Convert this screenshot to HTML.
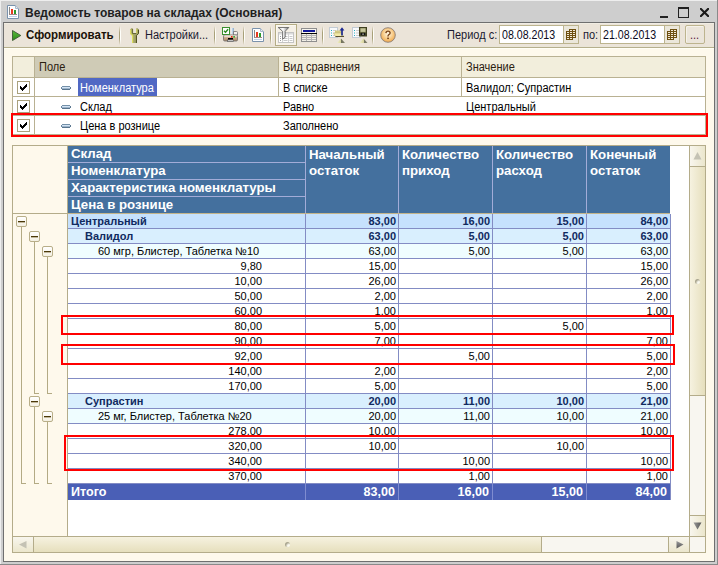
<!DOCTYPE html><html><head><meta charset="utf-8"><style>
*{margin:0;padding:0;box-sizing:border-box}
html,body{width:718px;height:565px;overflow:hidden;background:#cecece;font-family:"Liberation Sans", sans-serif;}
.a{position:absolute}
.t{position:absolute;white-space:nowrap;color:#000;transform-origin:0 0}
.r{text-align:right;transform-origin:100% 0}
.b{font-weight:bold}
</style></head><body><div class="a" style="left:0;top:0;width:718px;height:1px;background:#eeeeee"></div><div class="a" style="left:0;top:0;width:1px;height:565px;background:#eeeeee"></div><div class="a" style="left:0;top:564px;width:718px;height:1px;background:#8a8a8a"></div><div class="a" style="left:717px;top:0;width:1px;height:565px;background:#8a8a8a"></div><svg class="a" style="left:7px;top:5px" width="12" height="14" viewBox="0 0 12 14">
<path d="M0.5 0.5 H8.5 L11.5 3.5 V13.5 H0.5 Z" fill="#fdfeff" stroke="#7a92ac"/>
<path d="M8.5 0.5 V3.5 H11.5" fill="#e4eaf2" stroke="#a8b8ca"/>
<rect x="2" y="2" width="1" height="8" fill="#8a8a8a"/>
<rect x="2" y="9" width="8" height="1" fill="#a08888"/>
<rect x="4" y="4" width="2" height="5" fill="#e83a20"/>
<rect x="7" y="5" width="2" height="4" fill="#2a9a2a"/>
<rect x="2" y="11" width="8" height="1" fill="#bcd2ea"/>
</svg><div class="t b" style="top:5px;font-size:12px;line-height:16px;color:#1f1f1f;left:25px;">Ведомость товаров на складах (Основная)</div><div class="a" style="left:660px;top:16px;width:8px;height:2px;background:#222"></div><div class="a" style="left:678px;top:7px;width:11px;height:11px;border:1px solid #222;border-top-width:2px"></div><svg class="a" style="left:700px;top:8px" width="9" height="9" viewBox="0 0 9 9">
<path d="M0.9 0.9 L8.1 8.1 M8.1 0.9 L0.9 8.1" stroke="#1a1a1a" stroke-width="2.1" stroke-linecap="square"/></svg><div class="a" style="left:3px;top:22px;width:712px;height:540px;border:1px solid #6f6f6f;background:#fef9ec"></div><div class="a" style="left:4px;top:23px;width:710px;height:25px;background:#ebe4d9;border-top:1px solid #f1ede3;border-bottom:1px solid #b6af8c"></div><div class="a" style="left:4px;top:46px;width:710px;height:1px;background:#e9e5d8"></div><div class="a" style="left:4px;top:48px;width:710px;height:1px;background:#fffff6"></div><svg class="a" style="left:12px;top:30px" width="10" height="11" viewBox="0 0 10 11">
<defs><linearGradient id="pg" x1="0" y1="0" x2="0" y2="1"><stop offset="0" stop-color="#5cbc3c"/><stop offset="1" stop-color="#2a8a18"/></linearGradient></defs>
<path d="M0.5 0.5 L8.8 5.5 L0.5 10.5 Z" fill="url(#pg)" stroke="#3c5a34" stroke-width="0.9"/></svg><div class="t b" style="top:28px;font-size:12.5px;line-height:15px;color:#1a1208;transform:scaleX(0.92);left:26px;">Сформировать</div><div class="a" style="left:119px;top:26px;width:1px;height:19px;background:linear-gradient(rgba(168,160,120,0),#a8a078 35%,#a8a078 65%,rgba(168,160,120,0))"></div><div class="a" style="left:120px;top:26px;width:1px;height:19px;background:linear-gradient(rgba(255,255,250,0),#fffffa 30%,#fffffa 70%,rgba(255,255,250,0))"></div><svg class="a" style="left:130px;top:28px" width="9" height="15" viewBox="0 0 9 15">
<path d="M0 1.5 L1.8 0 L3 0.8 V5 H6 V0.8 L7.2 0 L9 1.5 V5.5 L7 7.5 V15 H2 V7.5 L0 5.5 Z" fill="#a4a468"/>
<path d="M0.6 1.5 V5.4 L2.6 7.4 V15" fill="none" stroke="#dcdc5c" stroke-width="1.2"/>
<path d="M6.6 1 V5.2" fill="none" stroke="#d0d060" stroke-width="1"/>
<path d="M8.5 1.8 V5.4 L6.4 7.5 V15" fill="none" stroke="#4a4a1c" stroke-width="1"/>
<path d="M2.6 1 V5.5 H6.2" fill="none" stroke="#5a5a28" stroke-width="0.8"/></svg><div class="t" style="top:28px;font-size:12px;line-height:15px;color:#1a1a30;transform:scaleX(0.917);left:145px;">Настройки...</div><div class="a" style="left:214px;top:26px;width:1px;height:19px;background:linear-gradient(rgba(168,160,120,0),#a8a078 35%,#a8a078 65%,rgba(168,160,120,0))"></div><div class="a" style="left:215px;top:26px;width:1px;height:19px;background:linear-gradient(rgba(255,255,250,0),#fffffa 30%,#fffffa 70%,rgba(255,255,250,0))"></div><svg class="a" style="left:222px;top:27px" width="17" height="17" viewBox="0 0 17 17">
<defs><linearGradient id="ppg" x1="0" y1="0" x2="1" y2="0"><stop offset="0" stop-color="#f4f8fc"/><stop offset="1" stop-color="#88a8c8"/></linearGradient>
<linearGradient id="pbg" x1="0" y1="0" x2="0" y2="1"><stop offset="0" stop-color="#f0e4d8"/><stop offset="0.5" stop-color="#c8a888"/><stop offset="1" stop-color="#a88868"/></linearGradient></defs>
<rect x="9" y="1" width="3" height="6" fill="url(#ppg)"/>
<path d="M11.5 4.5 H14.5 Q15.5 4.5 15.5 5.5 V8 H11.5 Z" fill="#f4f0ec" stroke="#707070" stroke-width="0.8"/>
<rect x="1.5" y="8" width="14" height="6" rx="1.2" fill="url(#pbg)" stroke="#6a6a6a" stroke-width="0.8"/>
<rect x="2.5" y="8.6" width="12" height="1" fill="#f4ece4"/>
<rect x="9" y="9" width="1.6" height="1.6" fill="#e82818"/><rect x="11.3" y="9" width="1.6" height="1.6" fill="#28a828"/>
<rect x="6" y="11" width="5" height="1.7" fill="#000"/>
<rect x="5.5" y="13" width="6" height="1.6" fill="#fff" stroke="#555" stroke-width="0.7"/>
<rect x="0.5" y="0.5" width="7" height="7" fill="#fff" stroke="#3a9030"/>
<path d="M2 3.8 L3.5 5.3 L6.1 2.3" fill="none" stroke="#2a8a20" stroke-width="1.4"/></svg><div class="a" style="left:243px;top:26px;width:1px;height:19px;background:linear-gradient(rgba(168,160,120,0),#a8a078 35%,#a8a078 65%,rgba(168,160,120,0))"></div><div class="a" style="left:244px;top:26px;width:1px;height:19px;background:linear-gradient(rgba(255,255,250,0),#fffffa 30%,#fffffa 70%,rgba(255,255,250,0))"></div><svg class="a" style="left:252px;top:28px" width="12" height="14" viewBox="0 0 12 14">
<path d="M0.5 0.5 H8.5 L11.5 3.5 V13.5 H0.5 Z" fill="#fdfeff" stroke="#7a92ac"/>
<path d="M8.5 0.5 V3.5 H11.5" fill="#e4eaf2" stroke="#a8b8ca"/>
<rect x="2" y="2" width="1" height="8" fill="#8a8a8a"/>
<rect x="2" y="9" width="8" height="1" fill="#a08888"/>
<rect x="4" y="4" width="2" height="5" fill="#e83a20"/>
<rect x="7" y="5" width="2" height="4" fill="#2a9a2a"/>
<rect x="2" y="11" width="8" height="1" fill="#bcd2ea"/>
</svg><div class="a" style="left:270px;top:26px;width:1px;height:19px;background:linear-gradient(rgba(168,160,120,0),#a8a078 35%,#a8a078 65%,rgba(168,160,120,0))"></div><div class="a" style="left:271px;top:26px;width:1px;height:19px;background:linear-gradient(rgba(255,255,250,0),#fffffa 30%,#fffffa 70%,rgba(255,255,250,0))"></div><div class="a" style="left:275px;top:24px;width:22px;height:22px;border:1px solid #b4ac84;background:#f5f0e6;box-shadow:inset 1px 1px 0 #fbf8f0"></div><svg class="a" style="left:278px;top:27px" width="16" height="16" viewBox="0 0 16 16">
<defs><linearGradient id="fg" x1="0" y1="0" x2="1" y2="0"><stop offset="0" stop-color="#d0d0d0"/><stop offset="0.45" stop-color="#ffffff"/><stop offset="1" stop-color="#707070"/></linearGradient></defs>
<rect x="0.5" y="5.5" width="15" height="10" fill="#fff" stroke="#c4c4c4"/>
<rect x="1" y="6" width="14" height="1.6" fill="#dcdcdc"/>
<path d="M4.5 6 V15 M10.5 6 V15" stroke="#d4d4d4"/>
<rect x="2" y="9" width="1" height="1" fill="#9a9a9a"/><rect x="2" y="11" width="1" height="1" fill="#9a9a9a"/><rect x="2" y="13" width="1" height="1" fill="#9a9a9a"/>
<path d="M5.5 9.5 H9.5 M5.5 11.5 H9.5 M5.5 13.5 H9.5 M11.5 9.5 H14.5 M11.5 11.5 H14.5 M11.5 13.5 H14.5" stroke="#c8c8c8"/>
<path d="M0.2 0.5 H10.8 L7.2 4.3 V10.2 L4.6 12.2 V4.3 Z" fill="url(#fg)" stroke="#5a5a5a" stroke-width="0.8" stroke-linejoin="round"/></svg><svg class="a" style="left:301px;top:28px" width="16" height="14" viewBox="0 0 16 14" shape-rendering="crispEdges">
<rect x="0" y="0" width="16" height="14" fill="#8e8e8e"/>
<rect x="1" y="1" width="14" height="12" fill="#b4b4b4"/>
<rect x="1" y="1" width="14" height="4" fill="#f6f4ec"/>
<rect x="2" y="2" width="12" height="2" fill="#10189a"/>
<rect x="0" y="5" width="16" height="1" fill="#050505"/>
<rect x="1" y="6" width="4" height="1" fill="#f2efe6"/><rect x="6" y="6" width="4" height="1" fill="#f2efe6"/><rect x="11" y="6" width="4" height="1" fill="#f2efe6"/><rect x="1" y="8" width="4" height="1" fill="#f2efe6"/><rect x="6" y="8" width="4" height="1" fill="#f2efe6"/><rect x="11" y="8" width="4" height="1" fill="#f2efe6"/><rect x="1" y="10" width="4" height="1" fill="#f2efe6"/><rect x="6" y="10" width="4" height="1" fill="#f2efe6"/><rect x="11" y="10" width="4" height="1" fill="#f2efe6"/><rect x="1" y="12" width="4" height="1" fill="#f2efe6"/><rect x="6" y="12" width="4" height="1" fill="#f2efe6"/><rect x="11" y="12" width="4" height="1" fill="#f2efe6"/></svg><div class="a" style="left:322px;top:26px;width:1px;height:19px;background:linear-gradient(rgba(168,160,120,0),#a8a078 35%,#a8a078 65%,rgba(168,160,120,0))"></div><div class="a" style="left:323px;top:26px;width:1px;height:19px;background:linear-gradient(rgba(255,255,250,0),#fffffa 30%,#fffffa 70%,rgba(255,255,250,0))"></div><svg class="a" style="left:329px;top:27px" width="18" height="17" viewBox="0 0 18 17">
<defs><linearGradient id="tg" x1="0" y1="0" x2="1" y2="0"><stop offset="0" stop-color="#f4f2c8"/><stop offset="0.5" stop-color="#d8d4a0"/><stop offset="0.55" stop-color="#70705c"/><stop offset="1" stop-color="#888870"/></linearGradient></defs>
<rect x="0.5" y="0.5" width="8" height="10" fill="#f8fafc" stroke="#c4ccd4"/>
<rect x="2" y="3" width="1" height="1" fill="#28b0c0"/><rect x="2" y="5.5" width="1" height="1" fill="#28b0c0"/><rect x="2" y="8" width="1" height="1" fill="#28b0c0"/>
<path d="M4 3.5 H7 M4 6 H7 M4 8.5 H7" stroke="#cfcfcf"/>
<rect x="6" y="3.5" width="7" height="5.5" fill="#d4cc84"/>
<path d="M4.5 6 H12.5 L14.8 9.6 H6.5 Z" fill="#f2eaa8" stroke="#b8b070" stroke-width="0.5"/>
<path d="M6.5 9.5 H15" stroke="#585030" stroke-width="1"/>
<path d="M13 2.5 V8.5" stroke="#1c2890" stroke-width="1.7"/>
<path d="M10.6 3.6 L13 0.2 L15.4 3.6 Z" fill="#1c2890"/>
<path d="M8 16 L12 11.6 L16 16 Z" fill="url(#tg)"/></svg><svg class="a" style="left:352px;top:27px" width="17" height="17" viewBox="0 0 17 17">
<rect x="0.5" y="0.5" width="8" height="10" fill="#f8fafc" stroke="#c4ccd4"/>
<rect x="2" y="3" width="1" height="1" fill="#28b0c0"/><rect x="2" y="5.5" width="1" height="1" fill="#28b0c0"/><rect x="2" y="8" width="1" height="1" fill="#28b0c0"/>
<path d="M4 3.5 H7 M4 6 H7 M4 8.5 H7" stroke="#cfcfcf"/>
<rect x="7.5" y="0.5" width="7" height="8.5" fill="#6c6c40" stroke="#404020"/>
<rect x="8.5" y="1.3" width="5" height="3.6" fill="#c4c49a"/>
<rect x="8.5" y="5.8" width="5" height="2.7" fill="#111"/>
<rect x="10.4" y="6.6" width="1.3" height="1.1" fill="#f0f0e0"/>
<path d="M7.5 16 L11.5 11.6 L15.5 16 Z" fill="url(#tg)"/></svg><div class="a" style="left:372px;top:26px;width:1px;height:19px;background:linear-gradient(rgba(168,160,120,0),#a8a078 35%,#a8a078 65%,rgba(168,160,120,0))"></div><div class="a" style="left:373px;top:26px;width:1px;height:19px;background:linear-gradient(rgba(255,255,250,0),#fffffa 30%,#fffffa 70%,rgba(255,255,250,0))"></div><svg class="a" style="left:380px;top:27px" width="16" height="16" viewBox="0 0 16 16">
<defs><radialGradient id="hg" cx="0.5" cy="0.42" r="0.62"><stop offset="0" stop-color="#fff6e6"/><stop offset="0.5" stop-color="#f9d090"/><stop offset="1" stop-color="#eea040"/></radialGradient></defs>
<circle cx="8" cy="8" r="7.3" fill="url(#hg)" stroke="#8c8078" stroke-width="0.9"/>
<path d="M5.9 6.1 Q6.1 4.1 8 4.1 Q10.1 4.1 10.1 5.9 Q10.1 7 8.8 7.7 Q8 8.1 8 9.4" fill="none" stroke="#7a4418" stroke-width="1.4"/>
<rect x="7.2" y="10.6" width="1.7" height="1.5" fill="#7a4418"/></svg><div class="t" style="top:28px;font-size:12px;line-height:15px;color:#1a1a30;transform:scaleX(0.917);left:447px;">Период с:</div><div class="a" style="left:499px;top:25px;width:65px;height:19px;border:1px solid #bcb48e;background:#fff"></div><div class="t" style="top:28px;font-size:12px;line-height:15px;color:#0a0a20;transform:scaleX(0.885);left:502px;">08.08.2013</div><div class="a" style="left:563px;top:25px;width:16px;height:19px;border:1px solid #bcb48e;background:#ebe7db"></div><svg class="a" style="left:566px;top:29px" width="10" height="11" viewBox="0 0 10 11" shape-rendering="crispEdges"><rect x="3" y="0" width="7" height="2" fill="#6e5010"/><rect x="0" y="2" width="10" height="7" fill="#6e5010"/><rect x="0" y="9" width="7" height="2" fill="#6e5010"/><rect x="4" y="1" width="2" height="1" fill="#f2ead8"/><rect x="7" y="1" width="2" height="1" fill="#f2ead8"/><rect x="1" y="3" width="2" height="1" fill="#f2ead8"/><rect x="4" y="3" width="2" height="1" fill="#f2ead8"/><rect x="7" y="3" width="2" height="1" fill="#f2ead8"/><rect x="1" y="5" width="2" height="1" fill="#f2ead8"/><rect x="4" y="5" width="2" height="1" fill="#f2ead8"/><rect x="7" y="5" width="2" height="1" fill="#f2ead8"/><rect x="1" y="7" width="2" height="1" fill="#f2ead8"/><rect x="4" y="7" width="2" height="1" fill="#f2ead8"/><rect x="7" y="7" width="2" height="1" fill="#f2ead8"/><rect x="1" y="9" width="2" height="1" fill="#f2ead8"/><rect x="4" y="9" width="2" height="1" fill="#f2ead8"/></svg><div class="t" style="top:28px;font-size:12px;line-height:15px;color:#1a1a30;transform:scaleX(0.917);left:583px;">по:</div><div class="a" style="left:600px;top:25px;width:65px;height:19px;border:1px solid #bcb48e;background:#fff"></div><div class="t" style="top:28px;font-size:12px;line-height:15px;color:#0a0a20;transform:scaleX(0.885);left:603px;">21.08.2013</div><div class="a" style="left:664px;top:25px;width:16px;height:19px;border:1px solid #bcb48e;background:#ebe7db"></div><svg class="a" style="left:667px;top:29px" width="10" height="11" viewBox="0 0 10 11" shape-rendering="crispEdges"><rect x="3" y="0" width="7" height="2" fill="#6e5010"/><rect x="0" y="2" width="10" height="7" fill="#6e5010"/><rect x="0" y="9" width="7" height="2" fill="#6e5010"/><rect x="4" y="1" width="2" height="1" fill="#f2ead8"/><rect x="7" y="1" width="2" height="1" fill="#f2ead8"/><rect x="1" y="3" width="2" height="1" fill="#f2ead8"/><rect x="4" y="3" width="2" height="1" fill="#f2ead8"/><rect x="7" y="3" width="2" height="1" fill="#f2ead8"/><rect x="1" y="5" width="2" height="1" fill="#f2ead8"/><rect x="4" y="5" width="2" height="1" fill="#f2ead8"/><rect x="7" y="5" width="2" height="1" fill="#f2ead8"/><rect x="1" y="7" width="2" height="1" fill="#f2ead8"/><rect x="4" y="7" width="2" height="1" fill="#f2ead8"/><rect x="7" y="7" width="2" height="1" fill="#f2ead8"/><rect x="1" y="9" width="2" height="1" fill="#f2ead8"/><rect x="4" y="9" width="2" height="1" fill="#f2ead8"/></svg><div class="a" style="left:685px;top:25px;width:20px;height:19px;border:1px solid #bdb48e;border-radius:2px;background:#ebe5da;box-shadow:inset 1px 1px 0 #f6f2ea"></div><div class="t" style="top:28px;font-size:12px;line-height:15px;color:#5a2040;transform:scaleX(0.917);left:690px;">...</div><div class="a" style="left:12px;top:56px;width:694px;height:79px;border:1px solid #b9b192;background:#fff"></div><div class="a" style="left:13px;top:57px;width:21px;height:20px;background:#f2eedc"></div><div class="a" style="left:35px;top:57px;width:243px;height:20px;background:#cfcbb6"></div><div class="a" style="left:279px;top:57px;width:182px;height:20px;background:#f2eedc"></div><div class="a" style="left:462px;top:57px;width:243px;height:20px;background:#f2eedc"></div><div class="a" style="left:13px;top:77px;width:692px;height:1px;background:#b9b192"></div><div class="a" style="left:34px;top:57px;width:1px;height:77px;background:#b9b192"></div><div class="a" style="left:278px;top:57px;width:1px;height:39px;background:#b9b192"></div><div class="a" style="left:461px;top:57px;width:1px;height:39px;background:#b9b192"></div><div class="a" style="left:13px;top:96px;width:692px;height:1px;background:#b9b192"></div><div class="a" style="left:13px;top:115px;width:692px;height:1px;background:#b9b192"></div><div class="t" style="top:60px;font-size:12px;line-height:15px;color:#2a2010;transform:scaleX(0.917);left:39px;">Поле</div><div class="t" style="top:60px;font-size:12px;line-height:15px;color:#2a2010;transform:scaleX(0.917);left:283px;">Вид сравнения</div><div class="t" style="top:60px;font-size:12px;line-height:15px;color:#2a2010;transform:scaleX(0.917);left:466px;">Значение</div><div class="a" style="left:17px;top:81px;width:13px;height:13px;border:1px solid #aaa17c;background:#fff"></div><svg class="a" style="left:20px;top:84px" width="7" height="7" viewBox="0 0 7 7" shape-rendering="crispEdges" fill="#000"><rect x="6" y="0" width="1" height="1"/><rect x="5" y="1" width="1" height="1"/><rect x="6" y="1" width="1" height="1"/><rect x="0" y="2" width="1" height="1"/><rect x="4" y="2" width="1" height="1"/><rect x="5" y="2" width="1" height="1"/><rect x="6" y="2" width="1" height="1"/><rect x="0" y="3" width="1" height="1"/><rect x="1" y="3" width="1" height="1"/><rect x="3" y="3" width="1" height="1"/><rect x="4" y="3" width="1" height="1"/><rect x="5" y="3" width="1" height="1"/><rect x="0" y="4" width="1" height="1"/><rect x="1" y="4" width="1" height="1"/><rect x="2" y="4" width="1" height="1"/><rect x="3" y="4" width="1" height="1"/><rect x="4" y="4" width="1" height="1"/><rect x="1" y="5" width="1" height="1"/><rect x="2" y="5" width="1" height="1"/><rect x="3" y="5" width="1" height="1"/><rect x="2" y="6" width="1" height="1"/></svg><svg class="a" style="left:61px;top:86px" width="10" height="4" viewBox="0 0 10 4" shape-rendering="crispEdges"><rect x="1" y="0" width="8" height="1" fill="#7390a8"/><rect x="0" y="1" width="1" height="2" fill="#6a86a0"/><rect x="9" y="1" width="1" height="2" fill="#5c7890"/><rect x="1" y="1" width="8" height="1" fill="#d4e4f4"/><rect x="1" y="2" width="8" height="1" fill="#9cb4ca"/><rect x="1" y="3" width="8" height="1" fill="#58748c"/></svg><div class="a" style="left:78px;top:78px;width:79px;height:18px;background:#5068c4"></div><div class="t" style="top:81px;font-size:12px;line-height:15px;color:#fff;transform:scaleX(0.917);left:80px;">Номенклатура</div><div class="t" style="top:81px;font-size:12px;line-height:15px;color:#000;transform:scaleX(0.917);left:283px;">В списке</div><div class="t" style="top:81px;font-size:12px;line-height:15px;color:#000;transform:scaleX(0.917);left:466px;">Валидол; Супрастин</div><div class="a" style="left:17px;top:100px;width:13px;height:13px;border:1px solid #aaa17c;background:#fff"></div><svg class="a" style="left:20px;top:103px" width="7" height="7" viewBox="0 0 7 7" shape-rendering="crispEdges" fill="#000"><rect x="6" y="0" width="1" height="1"/><rect x="5" y="1" width="1" height="1"/><rect x="6" y="1" width="1" height="1"/><rect x="0" y="2" width="1" height="1"/><rect x="4" y="2" width="1" height="1"/><rect x="5" y="2" width="1" height="1"/><rect x="6" y="2" width="1" height="1"/><rect x="0" y="3" width="1" height="1"/><rect x="1" y="3" width="1" height="1"/><rect x="3" y="3" width="1" height="1"/><rect x="4" y="3" width="1" height="1"/><rect x="5" y="3" width="1" height="1"/><rect x="0" y="4" width="1" height="1"/><rect x="1" y="4" width="1" height="1"/><rect x="2" y="4" width="1" height="1"/><rect x="3" y="4" width="1" height="1"/><rect x="4" y="4" width="1" height="1"/><rect x="1" y="5" width="1" height="1"/><rect x="2" y="5" width="1" height="1"/><rect x="3" y="5" width="1" height="1"/><rect x="2" y="6" width="1" height="1"/></svg><svg class="a" style="left:61px;top:105px" width="10" height="4" viewBox="0 0 10 4" shape-rendering="crispEdges"><rect x="1" y="0" width="8" height="1" fill="#7390a8"/><rect x="0" y="1" width="1" height="2" fill="#6a86a0"/><rect x="9" y="1" width="1" height="2" fill="#5c7890"/><rect x="1" y="1" width="8" height="1" fill="#d4e4f4"/><rect x="1" y="2" width="8" height="1" fill="#9cb4ca"/><rect x="1" y="3" width="8" height="1" fill="#58748c"/></svg><div class="t" style="top:100px;font-size:12px;line-height:15px;color:#000;transform:scaleX(0.917);left:80px;">Склад</div><div class="t" style="top:100px;font-size:12px;line-height:15px;color:#000;transform:scaleX(0.917);left:283px;">Равно</div><div class="t" style="top:100px;font-size:12px;line-height:15px;color:#000;transform:scaleX(0.917);left:466px;">Центральный</div><div class="a" style="left:17px;top:119px;width:13px;height:13px;border:1px solid #aaa17c;background:#fff"></div><svg class="a" style="left:20px;top:122px" width="7" height="7" viewBox="0 0 7 7" shape-rendering="crispEdges" fill="#000"><rect x="6" y="0" width="1" height="1"/><rect x="5" y="1" width="1" height="1"/><rect x="6" y="1" width="1" height="1"/><rect x="0" y="2" width="1" height="1"/><rect x="4" y="2" width="1" height="1"/><rect x="5" y="2" width="1" height="1"/><rect x="6" y="2" width="1" height="1"/><rect x="0" y="3" width="1" height="1"/><rect x="1" y="3" width="1" height="1"/><rect x="3" y="3" width="1" height="1"/><rect x="4" y="3" width="1" height="1"/><rect x="5" y="3" width="1" height="1"/><rect x="0" y="4" width="1" height="1"/><rect x="1" y="4" width="1" height="1"/><rect x="2" y="4" width="1" height="1"/><rect x="3" y="4" width="1" height="1"/><rect x="4" y="4" width="1" height="1"/><rect x="1" y="5" width="1" height="1"/><rect x="2" y="5" width="1" height="1"/><rect x="3" y="5" width="1" height="1"/><rect x="2" y="6" width="1" height="1"/></svg><svg class="a" style="left:61px;top:124px" width="10" height="4" viewBox="0 0 10 4" shape-rendering="crispEdges"><rect x="1" y="0" width="8" height="1" fill="#7390a8"/><rect x="0" y="1" width="1" height="2" fill="#6a86a0"/><rect x="9" y="1" width="1" height="2" fill="#5c7890"/><rect x="1" y="1" width="8" height="1" fill="#d4e4f4"/><rect x="1" y="2" width="8" height="1" fill="#9cb4ca"/><rect x="1" y="3" width="8" height="1" fill="#58748c"/></svg><div class="t" style="top:119px;font-size:12px;line-height:15px;color:#000;transform:scaleX(0.917);left:80px;">Цена в рознице</div><div class="t" style="top:119px;font-size:12px;line-height:15px;color:#000;transform:scaleX(0.917);left:283px;">Заполнено</div><div class="t" style="top:119px;font-size:12px;line-height:15px;color:#000;transform:scaleX(0.917);left:466px;"></div><div class="a" style="left:12px;top:145px;width:694px;height:408px;border:1px solid #b4ac8a;background:#fff"></div><div class="a" style="left:13px;top:146px;width:54px;height:390px;background:#fef9ec"></div><div class="a" style="left:67px;top:146px;width:1px;height:390px;background:#b4ac8a"></div><div class="a" style="left:13px;top:213px;width:54px;height:1px;background:#b4ac8a"></div><div class="a" style="left:68px;top:146px;width:602px;height:67px;background:#44709e"></div><div class="a" style="left:68px;top:162px;width:237px;height:1px;background:#a3acd8"></div><div class="a" style="left:68px;top:179px;width:237px;height:1px;background:#a3acd8"></div><div class="a" style="left:68px;top:196px;width:237px;height:1px;background:#a3acd8"></div><div class="a" style="left:305px;top:146px;width:1px;height:67px;background:#a3acd8"></div><div class="a" style="left:398px;top:146px;width:1px;height:67px;background:#a3acd8"></div><div class="a" style="left:492px;top:146px;width:1px;height:67px;background:#a3acd8"></div><div class="a" style="left:586px;top:146px;width:1px;height:67px;background:#a3acd8"></div><div class="a" style="left:68px;top:213px;width:602px;height:1px;background:#c4b48a"></div><div class="t b" style="top:146px;font-size:13.5px;line-height:16px;color:#fff;transform:scaleX(0.98);left:71px;">Склад</div><div class="t b" style="top:163px;font-size:13.5px;line-height:16px;color:#fff;transform:scaleX(0.98);left:71px;">Номенклатура</div><div class="t b" style="top:180px;font-size:13.5px;line-height:16px;color:#fff;transform:scaleX(0.98);left:71px;">Характеристика номенклатуры</div><div class="t b" style="top:197px;font-size:13.5px;line-height:16px;color:#fff;transform:scaleX(0.98);left:71px;">Цена в рознице</div><div class="t b" style="top:147px;font-size:13.5px;line-height:16px;color:#fff;transform:scaleX(0.98);left:309px;">Начальный<br>остаток</div><div class="t b" style="top:147px;font-size:13.5px;line-height:16px;color:#fff;transform:scaleX(0.98);left:402px;">Количество<br>приход</div><div class="t b" style="top:147px;font-size:13.5px;line-height:16px;color:#fff;transform:scaleX(0.98);left:496px;">Количество<br>расход</div><div class="t b" style="top:147px;font-size:13.5px;line-height:16px;color:#fff;transform:scaleX(0.98);left:590px;">Конечный<br>остаток</div><div class="a" style="left:68px;top:214px;width:602px;height:14px;background:#c6e1fd"></div><div class="a" style="left:68px;top:228px;width:602px;height:1px;background:#838cc4"></div><div class="t b" style="top:214px;font-size:11px;line-height:15px;color:#102a60;left:71px;">Центральный</div><div class="t b r" style="top:214px;font-size:11px;line-height:15px;color:#102a60;left:96px;width:300px;">83,00</div><div class="t b r" style="top:214px;font-size:11px;line-height:15px;color:#102a60;left:190px;width:300px;">16,00</div><div class="t b r" style="top:214px;font-size:11px;line-height:15px;color:#102a60;left:284px;width:300px;">15,00</div><div class="t b r" style="top:214px;font-size:11px;line-height:15px;color:#102a60;left:368px;width:300px;">84,00</div><div class="a" style="left:68px;top:229px;width:602px;height:14px;background:#d9effe"></div><div class="a" style="left:68px;top:243px;width:602px;height:1px;background:#838cc4"></div><div class="t b" style="top:229px;font-size:11px;line-height:15px;color:#102a60;left:85px;">Валидол</div><div class="t b r" style="top:229px;font-size:11px;line-height:15px;color:#102a60;left:96px;width:300px;">63,00</div><div class="t b r" style="top:229px;font-size:11px;line-height:15px;color:#102a60;left:190px;width:300px;">5,00</div><div class="t b r" style="top:229px;font-size:11px;line-height:15px;color:#102a60;left:284px;width:300px;">5,00</div><div class="t b r" style="top:229px;font-size:11px;line-height:15px;color:#102a60;left:368px;width:300px;">63,00</div><div class="a" style="left:68px;top:244px;width:602px;height:14px;background:#effdff"></div><div class="a" style="left:68px;top:258px;width:602px;height:1px;background:#838cc4"></div><div class="t" style="top:244px;font-size:11px;line-height:15px;color:#000;left:98px;">60 мгр, Блистер, Таблетка №10</div><div class="t r" style="top:244px;font-size:11px;line-height:15px;color:#000;left:96px;width:300px;">63,00</div><div class="t r" style="top:244px;font-size:11px;line-height:15px;color:#000;left:190px;width:300px;">5,00</div><div class="t r" style="top:244px;font-size:11px;line-height:15px;color:#000;left:284px;width:300px;">5,00</div><div class="t r" style="top:244px;font-size:11px;line-height:15px;color:#000;left:368px;width:300px;">63,00</div><div class="a" style="left:68px;top:259px;width:602px;height:14px;background:#ffffff"></div><div class="a" style="left:68px;top:273px;width:602px;height:1px;background:#838cc4"></div><div class="t r" style="top:259px;font-size:11px;line-height:15px;color:#000;left:-38px;width:300px;">9,80</div><div class="t r" style="top:259px;font-size:11px;line-height:15px;color:#000;left:96px;width:300px;">15,00</div><div class="t r" style="top:259px;font-size:11px;line-height:15px;color:#000;left:368px;width:300px;">15,00</div><div class="a" style="left:68px;top:274px;width:602px;height:14px;background:#ffffff"></div><div class="a" style="left:68px;top:288px;width:602px;height:1px;background:#838cc4"></div><div class="t r" style="top:274px;font-size:11px;line-height:15px;color:#000;left:-38px;width:300px;">10,00</div><div class="t r" style="top:274px;font-size:11px;line-height:15px;color:#000;left:96px;width:300px;">26,00</div><div class="t r" style="top:274px;font-size:11px;line-height:15px;color:#000;left:368px;width:300px;">26,00</div><div class="a" style="left:68px;top:289px;width:602px;height:14px;background:#ffffff"></div><div class="a" style="left:68px;top:303px;width:602px;height:1px;background:#838cc4"></div><div class="t r" style="top:289px;font-size:11px;line-height:15px;color:#000;left:-38px;width:300px;">50,00</div><div class="t r" style="top:289px;font-size:11px;line-height:15px;color:#000;left:96px;width:300px;">2,00</div><div class="t r" style="top:289px;font-size:11px;line-height:15px;color:#000;left:368px;width:300px;">2,00</div><div class="a" style="left:68px;top:304px;width:602px;height:14px;background:#ffffff"></div><div class="a" style="left:68px;top:318px;width:602px;height:1px;background:#838cc4"></div><div class="t r" style="top:304px;font-size:11px;line-height:15px;color:#000;left:-38px;width:300px;">60,00</div><div class="t r" style="top:304px;font-size:11px;line-height:15px;color:#000;left:96px;width:300px;">1,00</div><div class="t r" style="top:304px;font-size:11px;line-height:15px;color:#000;left:368px;width:300px;">1,00</div><div class="a" style="left:68px;top:319px;width:602px;height:14px;background:#ffffff"></div><div class="a" style="left:68px;top:333px;width:602px;height:1px;background:#838cc4"></div><div class="t r" style="top:319px;font-size:11px;line-height:15px;color:#000;left:-38px;width:300px;">80,00</div><div class="t r" style="top:319px;font-size:11px;line-height:15px;color:#000;left:96px;width:300px;">5,00</div><div class="t r" style="top:319px;font-size:11px;line-height:15px;color:#000;left:284px;width:300px;">5,00</div><div class="a" style="left:68px;top:334px;width:602px;height:14px;background:#ffffff"></div><div class="a" style="left:68px;top:348px;width:602px;height:1px;background:#838cc4"></div><div class="t r" style="top:334px;font-size:11px;line-height:15px;color:#000;left:-38px;width:300px;">90,00</div><div class="t r" style="top:334px;font-size:11px;line-height:15px;color:#000;left:96px;width:300px;">7,00</div><div class="t r" style="top:334px;font-size:11px;line-height:15px;color:#000;left:368px;width:300px;">7,00</div><div class="a" style="left:68px;top:349px;width:602px;height:14px;background:#ffffff"></div><div class="a" style="left:68px;top:363px;width:602px;height:1px;background:#838cc4"></div><div class="t r" style="top:349px;font-size:11px;line-height:15px;color:#000;left:-38px;width:300px;">92,00</div><div class="t r" style="top:349px;font-size:11px;line-height:15px;color:#000;left:190px;width:300px;">5,00</div><div class="t r" style="top:349px;font-size:11px;line-height:15px;color:#000;left:368px;width:300px;">5,00</div><div class="a" style="left:68px;top:364px;width:602px;height:14px;background:#ffffff"></div><div class="a" style="left:68px;top:378px;width:602px;height:1px;background:#838cc4"></div><div class="t r" style="top:364px;font-size:11px;line-height:15px;color:#000;left:-38px;width:300px;">140,00</div><div class="t r" style="top:364px;font-size:11px;line-height:15px;color:#000;left:96px;width:300px;">2,00</div><div class="t r" style="top:364px;font-size:11px;line-height:15px;color:#000;left:368px;width:300px;">2,00</div><div class="a" style="left:68px;top:379px;width:602px;height:14px;background:#ffffff"></div><div class="a" style="left:68px;top:393px;width:602px;height:1px;background:#838cc4"></div><div class="t r" style="top:379px;font-size:11px;line-height:15px;color:#000;left:-38px;width:300px;">170,00</div><div class="t r" style="top:379px;font-size:11px;line-height:15px;color:#000;left:96px;width:300px;">5,00</div><div class="t r" style="top:379px;font-size:11px;line-height:15px;color:#000;left:368px;width:300px;">5,00</div><div class="a" style="left:68px;top:394px;width:602px;height:14px;background:#d9effe"></div><div class="a" style="left:68px;top:408px;width:602px;height:1px;background:#838cc4"></div><div class="t b" style="top:394px;font-size:11px;line-height:15px;color:#102a60;left:85px;">Супрастин</div><div class="t b r" style="top:394px;font-size:11px;line-height:15px;color:#102a60;left:96px;width:300px;">20,00</div><div class="t b r" style="top:394px;font-size:11px;line-height:15px;color:#102a60;left:190px;width:300px;">11,00</div><div class="t b r" style="top:394px;font-size:11px;line-height:15px;color:#102a60;left:284px;width:300px;">10,00</div><div class="t b r" style="top:394px;font-size:11px;line-height:15px;color:#102a60;left:368px;width:300px;">21,00</div><div class="a" style="left:68px;top:409px;width:602px;height:14px;background:#effdff"></div><div class="a" style="left:68px;top:423px;width:602px;height:1px;background:#838cc4"></div><div class="t" style="top:409px;font-size:11px;line-height:15px;color:#000;left:98px;">25 мг, Блистер, Таблетка №20</div><div class="t r" style="top:409px;font-size:11px;line-height:15px;color:#000;left:96px;width:300px;">20,00</div><div class="t r" style="top:409px;font-size:11px;line-height:15px;color:#000;left:190px;width:300px;">11,00</div><div class="t r" style="top:409px;font-size:11px;line-height:15px;color:#000;left:284px;width:300px;">10,00</div><div class="t r" style="top:409px;font-size:11px;line-height:15px;color:#000;left:368px;width:300px;">21,00</div><div class="a" style="left:68px;top:424px;width:602px;height:14px;background:#ffffff"></div><div class="a" style="left:68px;top:438px;width:602px;height:1px;background:#838cc4"></div><div class="t r" style="top:424px;font-size:11px;line-height:15px;color:#000;left:-38px;width:300px;">278,00</div><div class="t r" style="top:424px;font-size:11px;line-height:15px;color:#000;left:96px;width:300px;">10,00</div><div class="t r" style="top:424px;font-size:11px;line-height:15px;color:#000;left:368px;width:300px;">10,00</div><div class="a" style="left:68px;top:439px;width:602px;height:14px;background:#ffffff"></div><div class="a" style="left:68px;top:453px;width:602px;height:1px;background:#838cc4"></div><div class="t r" style="top:439px;font-size:11px;line-height:15px;color:#000;left:-38px;width:300px;">320,00</div><div class="t r" style="top:439px;font-size:11px;line-height:15px;color:#000;left:96px;width:300px;">10,00</div><div class="t r" style="top:439px;font-size:11px;line-height:15px;color:#000;left:284px;width:300px;">10,00</div><div class="a" style="left:68px;top:454px;width:602px;height:14px;background:#ffffff"></div><div class="a" style="left:68px;top:468px;width:602px;height:1px;background:#838cc4"></div><div class="t r" style="top:454px;font-size:11px;line-height:15px;color:#000;left:-38px;width:300px;">340,00</div><div class="t r" style="top:454px;font-size:11px;line-height:15px;color:#000;left:190px;width:300px;">10,00</div><div class="t r" style="top:454px;font-size:11px;line-height:15px;color:#000;left:368px;width:300px;">10,00</div><div class="a" style="left:68px;top:469px;width:602px;height:14px;background:#ffffff"></div><div class="a" style="left:68px;top:483px;width:602px;height:1px;background:#838cc4"></div><div class="t r" style="top:469px;font-size:11px;line-height:15px;color:#000;left:-38px;width:300px;">370,00</div><div class="t r" style="top:469px;font-size:11px;line-height:15px;color:#000;left:190px;width:300px;">1,00</div><div class="t r" style="top:469px;font-size:11px;line-height:15px;color:#000;left:368px;width:300px;">1,00</div><div class="a" style="left:305px;top:214px;width:1px;height:286px;background:#838cc4"></div><div class="a" style="left:398px;top:214px;width:1px;height:286px;background:#838cc4"></div><div class="a" style="left:492px;top:214px;width:1px;height:286px;background:#838cc4"></div><div class="a" style="left:586px;top:214px;width:1px;height:286px;background:#838cc4"></div><div class="a" style="left:670px;top:214px;width:1px;height:286px;background:#838cc4"></div><div class="a" style="left:68px;top:484px;width:602px;height:16px;background:#4a5fb6"></div><div class="t b" style="top:484px;font-size:13.5px;line-height:16px;color:#fff;transform:scaleX(0.93);left:71px;">Итого</div><div class="t b r" style="top:484px;font-size:13.5px;line-height:16px;color:#fff;transform:scaleX(0.93);left:95px;width:300px;">83,00</div><div class="t b r" style="top:484px;font-size:13.5px;line-height:16px;color:#fff;transform:scaleX(0.93);left:189px;width:300px;">16,00</div><div class="t b r" style="top:484px;font-size:13.5px;line-height:16px;color:#fff;transform:scaleX(0.93);left:283px;width:300px;">15,00</div><div class="t b r" style="top:484px;font-size:13.5px;line-height:16px;color:#fff;transform:scaleX(0.93);left:367px;width:300px;">84,00</div><div class="a" style="left:305px;top:484px;width:1px;height:16px;background:#7f8cd0"></div><div class="a" style="left:398px;top:484px;width:1px;height:16px;background:#7f8cd0"></div><div class="a" style="left:492px;top:484px;width:1px;height:16px;background:#7f8cd0"></div><div class="a" style="left:586px;top:484px;width:1px;height:16px;background:#7f8cd0"></div><div class="a" style="left:21px;top:227px;width:1px;height:257px;background:#b3aa84"></div><div class="a" style="left:21px;top:483px;width:5px;height:1px;background:#b3aa84"></div><div class="a" style="left:34px;top:242px;width:1px;height:152px;background:#b3aa84"></div><div class="a" style="left:34px;top:393px;width:5px;height:1px;background:#b3aa84"></div><div class="a" style="left:47px;top:257px;width:1px;height:137px;background:#b3aa84"></div><div class="a" style="left:47px;top:393px;width:5px;height:1px;background:#b3aa84"></div><div class="a" style="left:34px;top:407px;width:1px;height:77px;background:#b3aa84"></div><div class="a" style="left:34px;top:483px;width:5px;height:1px;background:#b3aa84"></div><div class="a" style="left:47px;top:422px;width:1px;height:62px;background:#b3aa84"></div><div class="a" style="left:47px;top:483px;width:5px;height:1px;background:#b3aa84"></div><div class="a" style="left:16px;top:216px;width:11px;height:11px;border:1px solid #b8ae88;border-radius:2px;background:linear-gradient(#ffffff,#f4f0e2)"></div><div class="a" style="left:18px;top:221px;width:7px;height:1px;background:#4a3808;box-shadow:0 0.5px 0 #8a7848"></div><div class="a" style="left:29px;top:231px;width:11px;height:11px;border:1px solid #b8ae88;border-radius:2px;background:linear-gradient(#ffffff,#f4f0e2)"></div><div class="a" style="left:31px;top:236px;width:7px;height:1px;background:#4a3808;box-shadow:0 0.5px 0 #8a7848"></div><div class="a" style="left:42px;top:246px;width:11px;height:11px;border:1px solid #b8ae88;border-radius:2px;background:linear-gradient(#ffffff,#f4f0e2)"></div><div class="a" style="left:44px;top:251px;width:7px;height:1px;background:#4a3808;box-shadow:0 0.5px 0 #8a7848"></div><div class="a" style="left:29px;top:396px;width:11px;height:11px;border:1px solid #b8ae88;border-radius:2px;background:linear-gradient(#ffffff,#f4f0e2)"></div><div class="a" style="left:31px;top:401px;width:7px;height:1px;background:#4a3808;box-shadow:0 0.5px 0 #8a7848"></div><div class="a" style="left:42px;top:411px;width:11px;height:11px;border:1px solid #b8ae88;border-radius:2px;background:linear-gradient(#ffffff,#f4f0e2)"></div><div class="a" style="left:44px;top:416px;width:7px;height:1px;background:#4a3808;box-shadow:0 0.5px 0 #8a7848"></div><div class="a" style="left:689px;top:146px;width:16px;height:390px;background:#f8f6f0;border-left:1px solid #b4ac8a"></div><div class="a" style="left:689px;top:146px;width:16px;height:21px;background:linear-gradient(90deg,#f8f6ee,#ebe6cc);border-left:1px solid #b4ac8a;border-bottom:1px solid #b4ac8a"></div><div class="a" style="left:689px;top:167px;width:16px;height:229px;background:linear-gradient(90deg,#f6f2e0,#e6dfbd);border-left:1px solid #b4ac8a;border-bottom:1px solid #b4ac8a"></div><div class="a" style="left:689px;top:515px;width:16px;height:21px;background:linear-gradient(90deg,#f8f6ee,#ebe6cc);border-left:1px solid #b4ac8a;border-top:1px solid #b4ac8a"></div><svg class="a" style="left:693px;top:152px" width="9" height="8" viewBox="0 0 9 8"><path d="M4.5 0 L8.5 7.5 H0.5 Z" fill="#c4c2b4"/></svg><svg class="a" style="left:693px;top:522px" width="9" height="8" viewBox="0 0 9 8"><defs><linearGradient id="dg" x1="0" y1="0" x2="1" y2="0"><stop offset="0" stop-color="#9a9a9a"/><stop offset="1" stop-color="#555"/></linearGradient></defs><path d="M0.5 0.5 H8.5 L4.5 7.5 Z" fill="url(#dg)"/></svg><div class="a" style="left:695px;top:279px;width:5px;height:5px;border-radius:50%;background:radial-gradient(circle at 78% 78%,#fbfaf0 0,#fbfaf0 22%,#aaa690 62%)"></div><div class="a" style="left:13px;top:536px;width:676px;height:16px;background:#f8f6f0;border-top:1px solid #b4ac8a"></div><div class="a" style="left:13px;top:536px;width:21px;height:16px;background:linear-gradient(#f8f6ee,#ebe6cc);border-top:1px solid #b4ac8a;border-right:1px solid #b4ac8a"></div><div class="a" style="left:34px;top:536px;width:508px;height:16px;background:linear-gradient(#f6f2e0,#e6dfbd);border-top:1px solid #b4ac8a;border-right:1px solid #b4ac8a"></div><div class="a" style="left:668px;top:536px;width:21px;height:16px;background:linear-gradient(#f8f6ee,#ebe6cc);border-top:1px solid #b4ac8a;border-left:1px solid #b4ac8a"></div><div class="a" style="left:689px;top:536px;width:16px;height:16px;background:#f8f6f0;border-left:1px solid #b4ac8a;border-top:1px solid #b4ac8a"></div><svg class="a" style="left:19px;top:541px" width="8" height="8" viewBox="0 0 8 8"><path d="M0 3.5 L7.5 0 V7.5 Z" fill="#c4c2b4"/></svg><svg class="a" style="left:676px;top:541px" width="8" height="8" viewBox="0 0 8 8"><defs><linearGradient id="rg" x1="0" y1="0" x2="0" y2="1"><stop offset="0" stop-color="#9a9a9a"/><stop offset="1" stop-color="#555"/></linearGradient></defs><path d="M0.5 0 L7.5 3.5 L0.5 7.5 Z" fill="url(#rg)"/></svg><div class="a" style="left:285px;top:542px;width:5px;height:5px;border-radius:50%;background:radial-gradient(circle at 78% 78%,#fbfaf0 0,#fbfaf0 22%,#aaa690 62%)"></div><div class="a" style="left:11px;top:113px;width:697px;height:24px;border:2px solid #ff0000"></div><div class="a" style="left:61px;top:315px;width:613px;height:20px;border:2px solid #ff0000"></div><div class="a" style="left:61px;top:344px;width:614px;height:21px;border:2px solid #ff0000"></div><div class="a" style="left:64px;top:435px;width:610px;height:36px;border:2px solid #ff0000"></div></body></html>
